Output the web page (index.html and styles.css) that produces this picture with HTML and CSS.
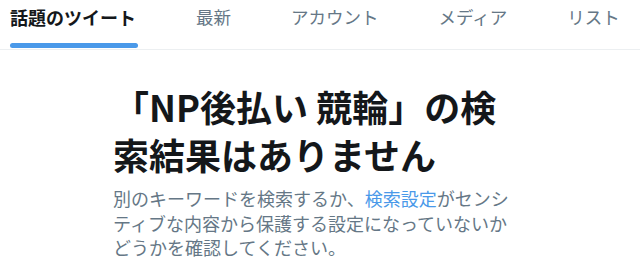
FILE: index.html
```html
<!DOCTYPE html>
<html lang="ja">
<head>
<meta charset="utf-8">
<link rel="stylesheet" href="styles.css">
</head>
<body>
<nav class="tabs">
  <div class="tab active"><span class="label">話題のツイート</span><span class="bar"></span></div>
  <div class="tab"><span class="label">最新</span></div>
  <div class="tab"><span class="label">アカウント</span></div>
  <div class="tab"><span class="label">メディア</span></div>
  <div class="tab"><span class="label">リスト</span></div>
</nav>
<main class="empty">
  <h1 class="title">「NP後払い 競輪」の検索結果はありません</h1>
  <p class="desc">別のキーワードを検索するか、<a class="link" href="#">検索設定</a>がセンシティブな内容から保護する設定になっていないかどうかを確認してください。</p>
</main>
</body>
</html>
```
FILE: styles.css
```css
html, body {
  margin: 0;
  padding: 0;
  background: #ffffff;
  width: 640px;
  height: 269px;
  overflow: hidden;
  font-family: "Noto Sans CJK JP", "Noto Sans", sans-serif;
}
.tabs {
  display: flex;
  gap: 60px;
  padding-left: 10px;
  height: 49px;
  border-bottom: 1px solid #eceff1;
  white-space: nowrap;
  overflow: hidden;
}
.tab {
  position: relative;
  display: flex;
  flex-direction: column;
  align-items: flex-start;
  flex-shrink: 0;
}
.label {
  font-size: 17.5px;
  line-height: 34px;
  color: #657786;
  font-weight: 400;
}
.tab.active .label {
  font-size: 18px;
  color: #14171a;
  font-weight: 700;
}
.bar {
  position: absolute;
  left: 0;
  right: -2px;
  top: 43px;
  height: 5px;
  border-radius: 3px;
  background: #4a99e9;
}
.empty {
  padding: 0 0 0 113px;
  width: 400px;
}
.title {
  margin: 0;
  padding-top: 32px;
  font-size: 36px;
  line-height: 48px;
  font-weight: 700;
  color: #14171a;
}
.desc {
  margin: 8px 0 0 0;
  font-size: 18px;
  line-height: 24.5px;
  color: #657786;
}
.link {
  color: #4a99e9;
  text-decoration: none;
}
```
